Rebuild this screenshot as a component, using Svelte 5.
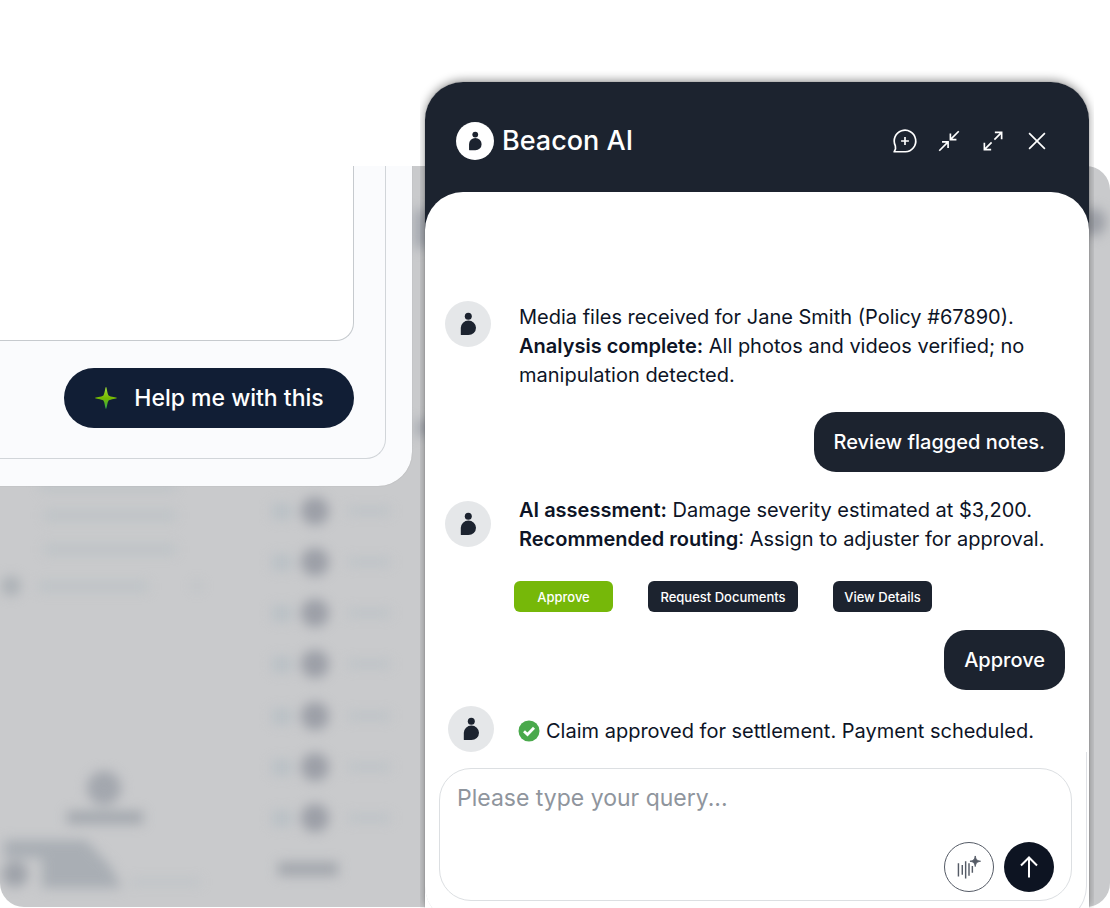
<script>
  const rows = [345, 396, 447, 498, 550, 601, 652];
  let query = $state('');
</script>

{#snippet mark()}
  <svg viewBox="0 0 46 46" aria-hidden="true">
    <circle cx="23.3" cy="15.2" r="3.5" />
    <path d="M15.8 33.5V26.8a7.6 7.3 0 1 1 7.6 7.3H16.4a.6.6 0 0 1-.6-.6Z" />
  </svg>
{/snippet}

<main class="stage">
  <div class="backdrop" aria-hidden="true">
    <svg width="1110" height="742" viewBox="0 0 1110 742">
      <defs>
        <filter id="soft" x="-50%" y="-50%" width="200%" height="200%" color-interpolation-filters="sRGB">
          <feGaussianBlur stdDeviation="6" />
        </filter>
      </defs>
      <g filter="url(#soft)" fill="#b9c0c5">
        <g opacity=".75">
          <rect x="40" y="316" width="136" height="8" />
          <rect x="44" y="345" width="132" height="9" />
          <rect x="44" y="379" width="132" height="9" />
          <rect x="38" y="416" width="110" height="9" />
        </g>
        <circle cx="11" cy="420" r="10" fill="#acb1b6" />
        <circle cx="197" cy="420" r="4" />
        {#each rows as y}
          <rect x="272" y={y - 7} width="20" height="15" />
          <circle cx="315" cy={y} r="14" fill="#9c9fa7" />
          <rect x="348" y={y - 3} width="42" height="6" />
        {/each}
        <circle cx="104" cy="622" r="17" fill="#a3a7ae" />
        <rect x="67" y="645" width="76" height="13" fill="#a3a8ae" />
        <path d="M4 674H86L110 700L122 722H42V692H4Z" fill="#a9aeb4" />
        <circle cx="15" cy="708" r="13" fill="#9fa3aa" />
        <rect x="130" y="714" width="70" height="4" />
        <rect x="278" y="696" width="60" height="14" fill="#a3a7ad" />
        <rect x="414" y="44" width="30" height="38" fill="#a4a8af" />
        <rect x="416" y="254" width="24" height="16" fill="#a4a8af" />
        <circle cx="1092" cy="56" r="14" fill="#9c9fa6" />
      </g>
    </svg>
  </div>

  <section class="assist">
    <div class="assist-inner">
      <div class="assist-field"></div>
      <button class="help">
        <svg width="24" height="24" viewBox="0 0 24 24" aria-hidden="true">
          <defs>
            <linearGradient id="leaf" x1="0" y1="0" x2="0" y2="1">
              <stop offset="0" stop-color="#a4e23c" />
              <stop offset=".5" stop-color="#76b900" />
              <stop offset="1" stop-color="#2fa84f" />
            </linearGradient>
          </defs>
          <path d="M12 1C12.800 1 13.200 7.500 14.600 9.400C16.500 10.800 23 11.200 23 12C23 12.800 16.500 13.200 14.600 14.600C13.200 16.500 12.800 23 12 23C11.200 23 10.800 16.500 9.400 14.600C7.500 13.200 1 12.800 1 12C1 11.200 7.500 10.800 9.400 9.400C10.800 7.500 11.200 1 12 1Z" fill="url(#leaf)" />
        </svg>
        Help me with this
      </button>
    </div>
  </section>

  <section class="chat">
    <header>
      <div class="brand">
        <span class="logo">{@render mark()}</span>
        <h1>Beacon AI</h1>
      </div>
      <nav>
        <button aria-label="New chat">
          <svg viewBox="0 0 28 28"><path d="M3.800 22.500 2.300 25.600H14.500A11.600 11.600 0 1 0 3.600 19.200Z" stroke-linejoin="round" /><path d="M14 9.800v8.400M9.800 14h8.400" /></svg>
        </button>
        <button aria-label="Collapse">
          <svg viewBox="0 0 28 28"><path d="M24.500 3.500 15.500 12.500M15.500 6v6.500H22M3.500 24.500 13 15M6.500 15h6.500V21.500" /></svg>
        </button>
        <button aria-label="Expand">
          <svg viewBox="0 0 28 28"><path d="M15.500 12.500 23.300 4.700M16 4.700h7.300V12M12.500 15.500 4.700 23.300M4.700 16v7.300H12" /></svg>
        </button>
        <button aria-label="Close">
          <svg viewBox="0 0 28 28"><path d="M5.500 5.500 22.500 22.500M22.500 5.500 5.500 22.500" /></svg>
        </button>
      </nav>
    </header>

    <div class="body">
      <div class="messages">
        <article>
          <span class="avatar">{@render mark()}</span>
          <div class="text">
            <p>Media files received for Jane Smith (Policy #67890).</p>
            <p><strong>Analysis complete:</strong> All photos and videos verified; no manipulation detected.</p>
          </div>
        </article>

        <p class="bubble first">Review flagged notes.</p>

        <article>
          <span class="avatar">{@render mark()}</span>
          <div class="text">
            <p><strong>AI assessment:</strong> Damage severity estimated at $3,200.</p>
            <p><strong>Recommended routing</strong>: Assign to adjuster for approval.</p>
          </div>
        </article>

        <div class="actions">
          <button class="go">Approve</button>
          <button class="wide">Request Documents</button>
          <button>View Details</button>
        </div>

        <p class="bubble second">Approve</p>

        <article class="last">
          <span class="avatar">{@render mark()}</span>
          <div class="text status">
            <svg width="22" height="22" viewBox="0 0 22 22" aria-hidden="true">
              <circle cx="11" cy="11" r="10.500" fill="#4aa94c" />
              <path d="m6 11.200 3.500 3.300L16 7.800" fill="none" stroke="#fff" stroke-width="2.800" />
            </svg>
            <p>Claim approved for settlement. Payment scheduled.</p>
          </div>
        </article>
      </div>

      <div class="dock">
        <form onsubmit={(e) => e.preventDefault()}>
          <textarea aria-label="Your query" placeholder="Please type your query..." rows="1" bind:value={query}></textarea>
          <div class="tools">
            <button type="button" class="voice" aria-label="Voice input">
              <svg viewBox="0 0 50 50">
                <path d="M14 21v14M18 23v10M21.500 19v18M25 21v13M28.500 24v7" fill="none" stroke="#555b66" stroke-width="1.500" />
                <path d="M31.500 13.500c.8 4 1.500 4.700 5.500 5.500c-4 .8-4.700 1.500-5.500 5.500c-.8-4-1.500-4.700-5.500-5.500c4-.8 4.700-1.500 5.500-5.500Z" fill="#555b66" stroke="#555b66" />
              </svg>
            </button>
            <button class="send" aria-label="Send">
              <svg viewBox="0 0 50 50"><path d="M25 35.500V16M17 23.500l8-8 8 8" fill="none" stroke="#fff" stroke-width="2" /></svg>
            </button>
          </div>
        </form>
      </div>
    </div>
  </section>
</main>

<style>
  :global(body) {
    margin: 0;
    background: #fff;
  }

  .stage {
    --ink: #0d1426;
    --navy: #1c232f;
    display: grid;
    grid-template-columns: minmax(0, 412fr) 13px minmax(0, 664fr) 21px;
    grid-template-rows: 82px 84px 1fr;
    height: 100vh;
    min-height: 908px;
    overflow: hidden;
    color: var(--ink);
    font-family: Inter, sans-serif;
  }

  .stage *,
  .stage {
    box-sizing: border-box;
  }

  p,
  h1 {
    margin: 0;
  }

  button {
    border: 0;
    padding: 0;
    font: inherit;
    cursor: pointer;
  }

  svg {
    display: block;
  }

  .backdrop {
    grid-area: 3 / 1 / 4 / -1;
    overflow: hidden;
    margin-bottom: 1px;
    border-radius: 24px;
    background: #c9cacc;
  }

  .assist {
    grid-area: 3 / 1;
    z-index: 1;
    align-self: start;
    padding: 0 26px 27px 0;
    border-radius: 0 0 34px 0;
    background: #fafbfd;
    box-shadow: 0 0 1px #999;
    clip-path: inset(0 -2px -2px 0);
  }

  .assist-inner {
    display: flex;
    flex-direction: column;
    align-items: flex-end;
    gap: 27px;
    padding: 0 31px 30px 0;
    border: solid #d1d5d9;
    border-width: 0 1px 1px 0;
    border-radius: 0 0 20px 0;
  }

  .assist-field {
    width: 100%;
    height: 175px;
    border: solid #c6cace;
    border-width: 0 1px 1px 0;
    border-radius: 0 0 18px 0;
    background: #fff;
  }

  .help {
    display: flex;
    align-items: center;
    justify-content: center;
    gap: 16px;
    width: 290px;
    height: 60px;
    border-radius: 30px;
    background: #111e35;
    color: #fff;
    font-size: 23px;
    font-weight: 500;
  }

  .chat {
    grid-area: 2 / 3 / 4 / 4;
    z-index: 2;
    display: flex;
    flex-direction: column;
    border-radius: 38px 38px 0 0;
    background: linear-gradient(var(--navy) 150px, #fff 150px);
    box-shadow: 0 0 1px #0006, 0 -2px 10px #0006;
    clip-path: inset(-14px -5px 0 -5px);
  }

  header {
    display: flex;
    align-items: center;
    justify-content: space-between;
    height: 111px;
    padding: 8px 39px 0 31px;
    color: #fff;
  }

  .brand {
    display: flex;
    align-items: center;
    gap: 8px;
  }

  h1 {
    font-size: 27px;
    line-height: 32px;
    font-weight: 500;
  }

  .logo {
    width: 38px;
    height: 38px;
    border-radius: 50%;
    background: #fff;
    fill: var(--navy);
  }

  nav {
    display: flex;
    gap: 18px;
  }

  nav button {
    width: 26px;
    height: 26px;
    background: none;
  }

  nav svg {
    fill: none;
    stroke: #fff;
    stroke-width: 1.8;
  }

  .body {
    flex: 1;
    display: flex;
    flex-direction: column;
    padding-top: 109px;
    border-radius: 38px 38px 0 0;
    background: #fff;
  }

  .messages {
    display: flex;
    flex-direction: column;
    padding: 0 24px 0 20px;
  }

  article {
    display: flex;
    align-items: center;
    gap: 28px;
  }

  article:first-child {
    align-items: flex-start;
  }

  .avatar {
    flex: none;
    width: 46px;
    height: 46px;
    border-radius: 50%;
    background: #e5e7e9;
    fill: var(--navy);
  }

  .text {
    flex: 1;
    padding-top: 2px;
    font-size: 20px;
    line-height: 29px;
  }

  strong {
    font-weight: 600;
  }

  .bubble {
    align-self: flex-end;
    padding: 0 20px;
    border-radius: 22px;
    background: var(--navy);
    color: #fff;
    font-size: 20px;
    line-height: 60px;
    font-weight: 500;
  }

  .first {
    margin: 22px 0;
  }

  .second {
    margin: 18px 0 16px;
  }

  .actions {
    display: flex;
    gap: 35px;
    margin-top: 27px;
    padding-left: 69px;
  }

  .actions button {
    width: 99px;
    height: 31px;
    border-radius: 6px;
    background: var(--navy);
    color: #fff;
    font-size: 13px;
    font-weight: 500;
  }

  .actions .wide {
    width: 150px;
  }

  .actions .go {
    background: #76b809;
  }

  .last {
    padding-left: 3px;
    gap: 24px;
  }

  .status {
    display: flex;
    align-items: center;
    gap: 6px;
    padding-top: 4px;
  }

  .dock {
    flex: none;
    height: 172px;
    margin: 0 2px -16px 0;
    padding: 16px 14px 0;
    border: solid #dfe1e5;
    border-width: 0 1px 1px 0;
    border-radius: 0 0 38px 38px;
  }

  form {
    display: flex;
    flex-direction: column;
    justify-content: space-between;
    height: 133px;
    padding: 13px 17px 8px;
    border: 1px solid #dcdfe2;
    border-radius: 32px;
  }

  textarea {
    height: 32px;
    padding: 0;
    border: 0;
    outline: 0;
    resize: none;
    background: none;
    color: var(--ink);
    font: 23px/32px Inter, sans-serif;
  }

  textarea::placeholder {
    color: #8f959d;
  }

  .tools {
    display: flex;
    justify-content: flex-end;
    gap: 10px;
  }

  .tools button {
    width: 50px;
    height: 50px;
    border-radius: 50%;
  }

  .voice {
    border: 1px solid #555b66;
    background: #fff;
  }

  .send {
    background: #0d1422;
  }
</style>
